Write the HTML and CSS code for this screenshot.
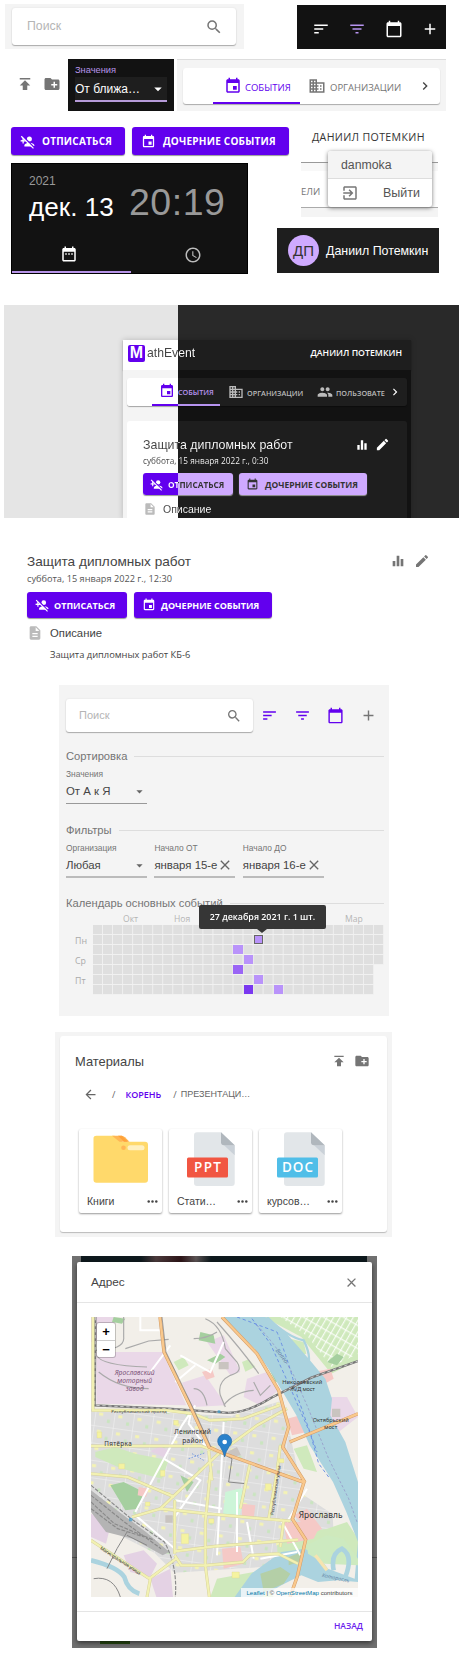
FILE: index.html
```html
<!DOCTYPE html>
<html lang="ru">
<head>
<meta charset="utf-8">
<title>MathEvent</title>
<link rel="stylesheet" href="styles.css">
</head>
<body>
<svg class="sprite" width="0" height="0">
  <symbol id="search" viewBox="0 0 24 24"><path d="M15.5 14h-.79l-.28-.27A6.471 6.471 0 0 0 16 9.5 6.5 6.5 0 1 0 9.5 16c1.61 0 3.09-.59 4.23-1.57l.27.28v.79l5 4.99L20.49 19l-4.99-5zm-6 0C7.01 14 5 11.99 5 9.5S7.01 5 9.5 5 14 7.01 14 9.5 11.99 14 9.5 14z"/></symbol>
  <symbol id="sort" viewBox="0 0 24 24"><path d="M3 18h6v-2H3v2zM3 6v2h18V6H3zm0 7h12v-2H3v2z"/></symbol>
  <symbol id="filter" viewBox="0 0 24 24"><path d="M10 18h4v-2h-4v2zM3 6v2h18V6H3zm3 7h12v-2H6v2z"/></symbol>
  <symbol id="calendar" viewBox="0 0 24 24"><path d="M20 3h-1V1h-2v2H7V1H5v2H4c-1.1 0-2 .9-2 2v16c0 1.1.9 2 2 2h16c1.1 0 2-.9 2-2V5c0-1.1-.9-2-2-2zm0 18H4V8h16v13z"/></symbol>
  <symbol id="add" viewBox="0 0 24 24"><path d="M19 13h-6v6h-2v-6H5v-2h6V5h2v6h6v2z"/></symbol>
  <symbol id="publish" viewBox="0 0 24 24"><path d="M5 4v2h14V4H5zm0 10h4v6h6v-6h4l-7-7-7 7z"/></symbol>
  <symbol id="newfolder" viewBox="0 0 24 24"><path d="M20 6h-8l-2-2H4c-1.11 0-1.99.89-1.99 2L2 18c0 1.11.89 2 2 2h16c1.11 0 2-.89 2-2V8c0-1.11-.89-2-2-2zm-1 8h-3v3h-2v-3h-3v-2h3V9h2v3h3v2z"/></symbol>
  <symbol id="event" viewBox="0 0 24 24"><path d="M17 12h-5v5h5v-5zM16 1v2H8V1H6v2H5c-1.11 0-1.99.9-1.99 2L3 19c0 1.1.89 2 2 2h14c1.1 0 2-.9 2-2V5c0-1.1-.9-2-2-2h-1V1h-2zm3 18H5V8h14v11z"/></symbol>
  <symbol id="business" viewBox="0 0 24 24"><path d="M12 7V3H2v18h20V7H12zM6 19H4v-2h2v2zm0-4H4v-2h2v2zm0-4H4V9h2v2zm0-4H4V5h2v2zm4 12H8v-2h2v2zm0-4H8v-2h2v2zm0-4H8V9h2v2zm0-4H8V5h2v2zm10 12h-8v-2h2v-2h-2v-2h2v-2h-2V9h8v10zm-2-8h-2v2h2v-2zm0 4h-2v2h2v-2z"/></symbol>
  <symbol id="people" viewBox="0 0 24 24"><path d="M16 11c1.66 0 2.99-1.34 2.99-3S17.66 5 16 5c-1.66 0-3 1.34-3 3s1.34 3 3 3zm-8 0c1.66 0 2.99-1.34 2.99-3S9.66 5 8 5C6.34 5 5 6.34 5 8s1.34 3 3 3zm0 2c-2.33 0-7 1.17-7 3.5V19h14v-2.5c0-2.33-4.67-3.5-7-3.5zm8 0c-.29 0-.62.02-.97.05 1.16.84 1.97 1.97 1.97 3.45V19h6v-2.5c0-2.33-4.67-3.5-7-3.5z"/></symbol>
  <symbol id="chevron" viewBox="0 0 24 24"><path d="M10 6 8.59 7.41 13.17 12l-4.58 4.59L10 18l6-6z"/></symbol>
  <symbol id="unsub" viewBox="0 0 24 24"><circle cx="15" cy="8" r="4"/><path d="M15 14c-2.67 0-8 1.34-8 4v2h12l4-1v-1c0-2.66-5.330-4-8-4zM6 10V6H4v3.500L1 10v2h3v3h2v-3h3v-2z"/><path d="M3.500 2.500 23 22" stroke="var(--gap)" stroke-width="2.200"/><path d="M2 3.500 21.500 23" stroke="currentColor" stroke-width="2"/></symbol>
  <symbol id="range" viewBox="0 0 24 24"><path d="M9 11H7v2h2v-2zm4 0h-2v2h2v-2zm4 0h-2v2h2v-2zm2-7h-1V2h-2v2H8V2H6v2H5c-1.11 0-1.99.9-1.99 2L3 20c0 1.1.89 2 2 2h14c1.1 0 2-.9 2-2V6c0-1.100-.9-2-2-2zm0 16H5V9h14v11z"/></symbol>
  <symbol id="clock" viewBox="0 0 24 24"><path d="M11.99 2C6.47 2 2 6.48 2 12s4.47 10 9.99 10C17.52 22 22 17.52 22 12S17.52 2 11.99 2zM12 20c-4.42 0-8-3.58-8-8s3.58-8 8-8 8 3.58 8 8-3.58 8-8 8zm.5-13H11v6l5.25 3.150.75-1.230-4.500-2.670z"/></symbol>
  <symbol id="exit" viewBox="0 0 24 24"><path d="M10.09 15.59 11.5 17l5-5-5-5-1.41 1.41L12.67 11H3v2h9.67l-2.58 2.59zM19 3H5c-1.11 0-2 .9-2 2v4h2V5h14v14H5v-4H3v4c0 1.100.89 2 2 2h14c1.100 0 2-.9 2-2V5c0-1.100-.9-2-2-2z"/></symbol>
  <symbol id="chart" viewBox="0 0 24 24"><path d="M10 20h4V4h-4v16zm-6 0h4v-8H4v8zM16 9v11h4V9h-4z"/></symbol>
  <symbol id="edit" viewBox="0 0 24 24"><path d="M3 17.25V21h3.75L17.81 9.94l-3.75-3.75L3 17.25zM20.71 7.04a.996.996 0 0 0 0-1.41l-2.34-2.34a.996.996 0 0 0-1.41 0l-1.83 1.83 3.75 3.75 1.83-1.83z"/></symbol>
  <symbol id="doc" viewBox="0 0 24 24"><path d="M14 2H6c-1.1 0-1.99.9-1.99 2L4 20c0 1.1.89 2 1.99 2H18c1.1 0 2-.9 2-2V8l-6-6zm2 16H8v-2h8v2zm0-4H8v-2h8v2zm-3-5V3.5L18.5 9H13z"/></symbol>
  <symbol id="close" viewBox="0 0 24 24"><path d="M19 6.41 17.59 5 12 10.59 6.41 5 5 6.41 10.59 12 5 17.59 6.41 19 12 13.41 17.59 19 19 17.59 13.41 12z"/></symbol>
  <symbol id="back" viewBox="0 0 24 24"><path d="M20 11H7.83l5.59-5.59L12 4l-8 8 8 8 1.41-1.41L7.83 13H20v-2z"/></symbol>
  <symbol id="more" viewBox="0 0 24 24"><circle cx="5" cy="12" r="2.300"/><circle cx="12" cy="12" r="2.300"/><circle cx="19" cy="12" r="2.300"/></symbol>
  <symbol id="drop" viewBox="0 0 24 24"><path d="M7 10l5 5 5-5z"/></symbol>
</svg>

<main class="sheet">
  <section class="row row-search">
    <div class="search-wrap"><div class="search"><span>Поиск</span><svg class="i18"><use href="#search"/></svg></div></div>
    <div class="toolbar">
      <svg class="i18"><use href="#sort"/></svg>
      <svg class="i18 lilac"><use href="#filter"/></svg>
      <svg class="i18"><use href="#calendar"/></svg>
      <svg class="i18"><use href="#add"/></svg>
    </div>
  </section>

  <section class="row row-tabs">
    <div class="file-actions"><svg class="i18"><use href="#publish"/></svg><svg class="i18"><use href="#newfolder"/></svg></div>
    <div class="select-dark">
      <label>Значения</label>
      <div class="select-field"><span>От ближа…</span><svg class="i18"><use href="#drop"/></svg></div>
    </div>
    <div class="tabs-wrap">
      <nav class="tabs">
        <a class="tab active"><svg class="i18"><use href="#event"/></svg><span>СОБЫТИЯ</span></a>
        <a class="tab org"><svg class="i18"><use href="#business"/></svg><span>ОРГАНИЗАЦИИ</span></a>
        <svg class="next"><use href="#chevron"/></svg>
      </nav>
    </div>
  </section>

  <section class="row row-actions">
    <button class="btn b1"><svg class="i15"><use href="#unsub"/></svg><span>ОТПИСАТЬСЯ</span></button>
    <button class="btn b2"><svg class="i15"><use href="#event"/></svg><span>ДОЧЕРНИЕ СОБЫТИЯ</span></button>
    <span class="account">ДАНИИЛ ПОТЕМКИН</span>
  </section>

  <section class="row row-picker">
    <div class="picker">
      <div class="picker-head">
        <div class="picker-date"><span class="year">2021</span><span class="day">дек. 13</span></div>
        <span class="time">20:19</span>
      </div>
      <div class="picker-tabs">
        <span class="on"><svg class="i18"><use href="#range"/></svg></span>
        <span><svg class="i18"><use href="#clock"/></svg></span>
      </div>
    </div>
    <div class="user-side">
      <div class="strip">
        <div class="strip-tabs">ЕЛИ</div>
        <div class="menu">
          <div class="menu-user">danmoka</div>
          <div class="menu-item"><svg class="i18"><use href="#exit"/></svg><span>Выйти</span></div>
        </div>
      </div>
      <div class="usercard"><span class="avatar">ДП</span><span>Даниил Потемкин</span></div>
    </div>
  </section>

  <section class="themes">
    <div class="app">
      <header class="app-head">
        <div class="logo"><b>M</b></div><span class="split brand">athEvent</span>
        <span class="app-user">ДАНИИЛ ПОТЕМКИН</span>
      </header>
      <div class="app-body">
        <nav class="app-tabs">
          <a class="app-tab app-active"><svg class="i16"><use href="#event"/></svg><span>СОБЫТИЯ</span></a>
          <a class="app-tab app-org"><svg class="i16"><use href="#business"/></svg><span>ОРГАНИЗАЦИИ</span></a>
          <a class="app-tab app-ppl"><svg class="i16"><use href="#people"/></svg><span>ПОЛЬЗОВАТЕ</span></a>
          <svg class="app-next"><use href="#chevron"/></svg>
        </nav>
        <article class="app-card">
          <div class="app-title"><span class="split">Защита дипломных работ</span><svg class="i14"><use href="#chart"/></svg><svg class="i15"><use href="#edit"/></svg></div>
          <div class="app-date"><span class="split">суббота, 15 января 2022 г., 0:30</span></div>
          <div class="app-buttons">
            <button class="btn s1"><svg class="i13"><use href="#unsub"/></svg><span class="split">ОТПИСАТЬСЯ</span></button>
            <button class="btn s2"><svg class="i13"><use href="#event"/></svg><span>ДОЧЕРНИЕ СОБЫТИЯ</span></button>
          </div>
          <div class="app-desc"><svg class="i14"><use href="#doc"/></svg><span class="split">Описание</span></div>
        </article>
      </div>
    </div>
  </section>

  <section class="details">
    <div class="details-title"><h2>Защита дипломных работ</h2><svg class="i16"><use href="#chart"/></svg><svg class="i16"><use href="#edit"/></svg></div>
    <div class="details-date">суббота, 15 января 2022 г., 12:30</div>
    <div class="details-buttons">
      <button class="btn d1"><svg class="i14"><use href="#unsub"/></svg><span>ОТПИСАТЬСЯ</span></button>
      <button class="btn d2"><svg class="i14"><use href="#event"/></svg><span>ДОЧЕРНИЕ СОБЫТИЯ</span></button>
    </div>
    <div class="details-desc"><svg class="i16"><use href="#doc"/></svg><span>Описание</span></div>
    <p>Защита дипломных работ КБ-6</p>
  </section>

  <section class="filters">
    <div class="filters-top">
      <div class="search small"><span>Поиск</span><svg class="i16"><use href="#search"/></svg></div>
      <svg class="i17"><use href="#sort"/></svg>
      <svg class="i17"><use href="#filter"/></svg>
      <svg class="i17"><use href="#calendar"/></svg>
      <svg class="i17 gray"><use href="#add"/></svg>
    </div>
    <div class="rule r1"><span>Сортировка</span></div>
    <div class="fields f1">
      <div class="field"><label>Значения</label><div class="value"><span>От А к Я</span><svg class="i15"><use href="#drop"/></svg></div></div>
    </div>
    <div class="rule r2"><span>Фильтры</span></div>
    <div class="fields f2">
      <div class="field thick"><label>Организация</label><div class="value"><span>Любая</span><svg class="i15"><use href="#drop"/></svg></div></div>
      <div class="field thick"><label>Начало ОТ</label><div class="value"><span>января 15-е</span><svg class="i16 clear"><use href="#close"/></svg></div></div>
      <div class="field thick"><label>Начало ДО</label><div class="value"><span>января 16-е</span><svg class="i16 clear"><use href="#close"/></svg></div></div>
    </div>
    <div class="rule r3"><span>Календарь основных событий</span></div>
    <div class="heat">
      <div class="months"><span class="m1">Окт</span><span class="m2">Ноя</span><span class="m3">Фев</span><span class="m4">Мар</span></div>
      <div class="heat-body">
        <div class="weekdays"><span>Пн</span><span>Ср</span><span>Пт</span></div>
        <div class="cells">
          <i class="blank"></i><i class="c1"></i><i class="c2"></i><i class="c3"></i><i class="c4"></i><i class="c5"></i><i class="c6"></i><i class="c7"></i>
        </div>
      </div>
      <div class="tip">27 декабря 2021 г. 1 шт.</div>
    </div>
  </section>

  <section class="files-wrap">
    <div class="files">
      <div class="files-head"><h2>Материалы</h2><svg class="i16"><use href="#publish"/></svg><svg class="i16"><use href="#newfolder"/></svg></div>
      <div class="crumbs"><svg class="i15"><use href="#back"/></svg><span class="sl1">/</span><a>КОРЕНЬ</a><span class="sl2">/</span><span class="here">ПРЕЗЕНТАЦИ…</span></div>
      <div class="tiles">
        <div class="tile">
          <svg class="art" viewBox="0 0 83 60"><path d="M14.500 10a3 3 0 0 1 3-3.300h18l8 6h22.500a3 3 0 0 1 3 3v35a3 3 0 0 1-3 3h-48.500a3 3 0 0 1-3-3z" fill="#ffd96b"/><path d="M33 6.700h9.500q2 0 3.500 1.500l4.500 4.500h-10z" fill="#ffb655"/><path d="M39 6.700h4l6 6h-4z" fill="#ffa23a"/><circle cx="44.500" cy="18.700" r="2.300" fill="#ffb655"/><rect x="48.500" y="16.300" width="17" height="5" rx="2.500" fill="#fff0c0"/></svg>
          <div class="tile-foot"><span>Книги</span><svg class="i13"><use href="#more"/></svg></div>
        </div>
        <div class="tile">
          <svg class="art" viewBox="0 0 83 60"><path d="M28 3.300h24l13.700 13V54a3 3 0 0 1-3 3H28a3 3 0 0 1-3-3V6.300a3 3 0 0 1 3-3z" fill="#e2e6e9"/><path d="M55 16.300h10.700v10z" fill="#cad1d8"/><path d="M52 3.300l13.700 13H55a3 3 0 0 1-3-3z" fill="#b0b7bd"/><rect x="18" y="28.500" width="41" height="20" rx="1.500" fill="#f15642"/><text x="38.500" y="43" class="badge" textLength="27">PPT</text></svg>
          <div class="tile-foot"><span>Стати…</span><svg class="i13"><use href="#more"/></svg></div>
        </div>
        <div class="tile">
          <svg class="art" viewBox="0 0 83 60"><path d="M28 3.300h24l13.700 13V54a3 3 0 0 1-3 3H28a3 3 0 0 1-3-3V6.300a3 3 0 0 1 3-3z" fill="#e2e6e9"/><path d="M55 16.300h10.700v10z" fill="#cad1d8"/><path d="M52 3.300l13.700 13H55a3 3 0 0 1-3-3z" fill="#b0b7bd"/><rect x="18" y="28.500" width="41" height="20" rx="1.500" fill="#50bee8"/><text x="38.500" y="43" class="badge" textLength="31">DOC</text></svg>
          <div class="tile-foot"><span>курсов…</span><svg class="i13"><use href="#more"/></svg></div>
        </div>
      </div>
    </div>
  </section>

  <section class="backdrop">
    <div class="modal">
      <header><h2>Адрес</h2><svg class="i15"><use href="#close"/></svg></header>
      <div class="map">
        <svg viewBox="92 215 801 840" preserveAspectRatio="none">
          <defs>
            <pattern id="blocks" width="58" height="52" patternUnits="userSpaceOnUse" patternTransform="rotate(8)"><path d="M0 0H58M0 0V52" stroke="#f4f4f4" stroke-width="3"/><rect x="12" y="12" width="12" height="9" fill="#f4f3b4"/><rect x="38" y="30" width="9" height="10" fill="#c9e5bf"/></pattern>
            <pattern id="garden" width="17" height="30" patternUnits="userSpaceOnUse" patternTransform="rotate(30)"><path d="M2 0V30M0 2H17" stroke="#fff" stroke-width="3"/></pattern>
          </defs>
          <path fill="#f2efe9" d="M92 215h801v840H92z"/>
          <path fill="#ead8e8" d="M92 215h70v75H92zM108 320h198l72 160-270-5zM365 412l70-22 62 90-100 5zM440 290l50-20 50 110-30 10zM560 400l60-20 40 50-60 50-50-25zM785 455h75l33 60-65 50z"/>
          <path fill="#ddd" d="M92 492l420 20 150-45 25 90 40 190 90 60 5 110-90 40-390 25-60-60-100-50-90-110-20-20z"/>
          <path fill="url(#blocks)" d="M92 492l420 20 150-45 25 90 40 190 90 60 5 110-90 40-390 25-60-60-100-50-90-110-20-20z"/>
          <path fill="#cfe9bc" d="M610 215h283v130l-80 40-90-110zM545 350l20-8 20 22-30 15zM690 280l40 10 8 35-30 12zM340 350l30-15 15 25-30 15zM105 620l60-15 60 20 100 20-20 55-120-30-80-35zM700 610l40-10 30 80-40-10zM650 900l90-40 60-10 60-20 33 50v60l-240 10zM470 1000l110-20 60 75H450z"/>
          <path fill="url(#garden)" d="M660 215h233v110l-80 40-70-90z"/>
          <path fill="#a5cf9f" d="M150 720l40-10 60 30-15 50-40 5zM605 330l25 15 25 55-8 12zM640 390l20 5 18 45-15-8zM160 215l35 5-10 15-30-5zM360 690l40 20-20 30zM800 350l30-25 20 10-20 25zM440 345l40-20 15 10-30 20zM420 260l40 10 5 25-50-10z"/>
          <path fill="#f5c9c6" d="M670 830l60 0 40 30-10 20-80 15zM700 810l40-20 45 60-25 15zM545 775l40 5-5 40-35-5zM485 910l55-5 10 50-60 15zM235 725l30 5-8 25-25-5zM425 380l30-10 8 25-25 8zM760 380l50-10 10 30-35 20zM680 520l40-10 20 50-45 10z"/>
          <path fill="#e4d2e4" d="M92 805l60 30-15 60-45-20zM190 930l60-15 40 40-20 40-60-15zM270 1000l60-30 8 85h-50zM270 618l30-15 30 15-20 18z"/>
          <path fill="#c9c4c0" d="M475 350h30v22h-30zM815 490h25v25h-25zM315 810h22v22h-22zM500 620l30-15 12 25-30 5z"/>
          <path fill="#cdf5d8" d="M495 740l50-12 8 30-15 50-50 0z"/>
          <path fill="#abd3df" d="M485 215h130l60 45 70 80 50 60 20 60-5 50 45 80 38 120v180l-35-90-40-90-70-110-40-90-70-120-55-80z"/>
          <path fill="#abd3df" d="M893 890v120l-60-5-60 5-50-20-60 30-60 35h-80l50-70 90-65 70-10 40 20 30 40 80 30z"/>
          <path fill="#b4cfa7" d="M600 985l60-20 30 20-20 30-60 25zM685 935l40-15-10 30-30 10z"/>
          <path fill="#cdeac0" d="M740 900l60-30 50 10 43 60v20l-100-5-50-30z"/>
          <path fill="none" stroke="#abd3df" stroke-width="14" d="M820 975q-10-50 25-65 35 20 10 85M92 945q80 20 100 50 10 40 45 50"/>
          <path fill="none" stroke="#abd3df" stroke-width="7" d="M620 215q60 60 110 70 20 40 15 65"/>
          <path fill="none" stroke="#f6e4b0" stroke-width="10" d="M765 930l35 45"/>
          <path fill="none" stroke="#6d92e4" stroke-width="3" stroke-dasharray="10 8" d="M530 215l120 45q40 100 60 190l60 170M575 220l55 75 50 110 70 160 25 90 30 40"/>
          <path fill="none" stroke="#87b" stroke-width="1.500" stroke-dasharray="8 6" d="M590 240q60 60 110 150l40 90 65 160 60 120 25 70"/>
          <g fill="none" stroke="#aaa" stroke-width="3.500"><path d="M190 215v60q5 40-90 40M195 310l70-23 60-5M110 330q10 30 150 35M115 380q60 50 150 50M435 220q50 20 60 90l35 40q20 30-20 40-40 20-30 60l15 35M470 230q80 90 125 155M400 280q40 0 70-20M490 480q30-40 90-45M400 430q30 0 40 50M580 410l20 40 30-30"/></g>
          <path fill="none" stroke="#fff" stroke-width="6" d="M240 215v40h60M330 300l-60 80M360 330l90 50 40-90M345 410l60-50M405 480l-40 60-140 260M310 640l110 65-80 115M490 530l-20 400M345 765l140 25M680 830l60-100M560 830l20 110M660 820l60 110M600 940l110-20M225 810l130 110M530 740v180M395 485l-10 50 60 80"/>
          <path fill="#b4b4b4" d="M92 735l85 65 80 60 70 60-20 10-90-50-80-20-45-60z"/>
          <path fill="none" stroke="#8a8a8a" stroke-width="3.500" stroke-dasharray="12 4" d="M92 720l120 100 100 70q40 70 33 165M92 750l100 80 110 80M92 770l70 65 120 50M92 790l80 60 80 25"/>
          <path fill="none" stroke="#777" stroke-width="7" d="M105 215l-2 265 220 10 170 12q60 5 140-45l120-60 140-50"/>
          <path fill="none" stroke="#ccc" stroke-width="3" stroke-dasharray="10 8" d="M105 215l-2 265 220 10 170 12q60 5 140-45l120-60 140-50"/>
          <path fill="none" stroke="#888" stroke-width="3" d="M200 860l-30 50-30 60M100 1000q60-10 80 55M200 870l60 30M495 630l20 10-10 70 50 5-5 40"/>
          <path fill="none" stroke="#d5d09a" stroke-width="9" d="M98 215v280h220l80 10 50 20 100-5 110-40M92 602h330l60 20M92 685l110 10 140 60M680 490l-90 50-110 80-180 170-85 25M300 790l140 15 190 17 60 5M343 765v160M570 650l-30 140M660 600l-10 80-25 140M343 918l120-15 250-20M343 930l20 30 75 0 110-10 20-20 85-5 60 30M450 680l-15 150v130l12 95M92 885l175 115 80-60M270 1000l-10 55M445 615l10 90M670 825l-10 80"/>
          <path fill="none" stroke="#f2f1b2" stroke-width="6.500" d="M98 215v280h220l80 10 50 20 100-5 110-40M92 602h330l60 20M92 685l110 10 140 60M680 490l-90 50-110 80-180 170-85 25M300 790l140 15 190 17 60 5M343 765v160M570 650l-30 140M660 600l-10 80-25 140M343 918l120-15 250-20M343 930l20 30 75 0 110-10 20-20 85-5 60 30M450 680l-15 150v130l12 95M92 885l175 115 80-60M270 1000l-10 55M445 615l10 90M670 825l-10 80"/>
          <path fill="none" stroke="#d29b67" stroke-width="10" d="M299 215l12 105 80 165 55 120 40 18 245 88-35 110 40 62-25 110-22 62M485 215l105 110 65 110 30 110-18 60 67 106M893 505l-205 85"/>
          <path fill="none" stroke="#f9c88c" stroke-width="7" d="M299 215l12 105 80 165 55 120 40 18 245 88-35 110 40 62-25 110-22 62M485 215l105 110 65 110 30 110-18 60 67 106M893 505l-205 85"/>
          <path fill="none" stroke="#777" stroke-width="2" d="M305 215l12 105 80 165 55 120"/>
          <g fill="#f5f3a0" stroke="#ddd694" stroke-width="1"><path d="M175 655h18v16h-18zM300 675h14v18h-14zM615 715h18v20h-18zM363 865h22v30h-22zM445 820h16v14h-16zM515 980h22v18h-22zM110 560h14v18h-14zM340 525h14v14h-14zM655 640h16v12h-16zM255 770h14v12h-14z"/></g>
          <path fill="#39c" d="M206 818h10v10h-10zM472 495h8v8h-8z" opacity=".7"/>
          <path fill="none" stroke="#4f7de0" stroke-width="2" stroke-dasharray="5 4" d="M385 640l50-18M395 625l35 20"/>
          <g class="lbl" text-anchor="middle">
            <g font-style="italic" fill="#7c5578" font-size="20"><text x="223" y="388" textLength="120">Ярославский</text><text x="223" y="412" textLength="104">моторный</text><text x="223" y="436" textLength="54">завод</text></g>
            <g font-size="17"><text x="726" y="417" textLength="120">Николаевский</text><text x="727" y="438" textLength="74">Ж/Д мост</text><text x="811" y="531" textLength="108">Октябрьский</text><text x="811" y="551" textLength="40">мост</text><text x="173" y="603" font-size="19" textLength="82">Пятёрка</text></g>
            <g font-size="20"><text x="397" y="567" textLength="110">Ленинский</text><text x="397" y="593" textLength="62">район</text></g>
            <text x="236" y="502" font-size="13" textLength="166">Республиканский проезд</text>
            <text x="781" y="819" font-size="25" textLength="132">Ярославль</text>
            <text transform="translate(178 950) rotate(33)" font-size="14" textLength="142">Магистральная улица</text>
            <text transform="translate(650 735) rotate(-82)" font-size="13" textLength="150">Республиканская улица</text>
            <text transform="translate(825 1003) rotate(12)" font-size="16" font-style="italic" fill="#6787a8" textLength="84">Которосль</text>
            <text transform="translate(660 335) rotate(52)" font-size="18" font-style="italic" fill="#6787a8" textLength="50">Волга</text>
          </g>
          <path d="M493 635q-5-18-13-31a21 21 0 1 1 26 0q-9 13-13 31z" fill="#2a81cb" stroke="#2268a5" stroke-width="2"/><circle cx="493" cy="590" r="7" fill="#fff"/>
        </svg>
        <div class="zoom"><button>+</button><button>−</button></div>
        <div class="credit"><a>Leaflet</a> | © <a>OpenStreetMap</a> contributors</div>
      </div>
      <footer><a>НАЗАД</a></footer>
    </div>
  </section>
</main>
</body>
</html>
```
FILE: styles.css
```css
* { box-sizing: border-box; }
body { margin: 0; background: #fff; font-family: "Liberation Sans", Arial, sans-serif; color: #444; }
.sprite { position: absolute; }
svg { flex: none; fill: currentColor; display: block; }
h2, p { margin: 0; font-weight: 400; }
span, a, label { white-space: nowrap; }
.sheet { width: 468px; height: 1676px; overflow: hidden; }
.row { display: flex; }
.i13 { width: 13px; height: 13px; }
.i14 { width: 14px; height: 14px; }
.i15 { width: 15px; height: 15px; }
.i16 { width: 16px; height: 16px; }
.i17 { width: 17px; height: 17px; }
.i18 { width: 18px; height: 18px; }
.lilac { color: #b794f0; }

.row-search { padding: 4px 0 0 5px; height: 59px; }
.search-wrap { width: 239px; height: 45px; background: #f4f4f4; padding: 4px 7px; }
.search { height: 37px; width: 224px; display: flex; align-items: center; justify-content: space-between; padding: 0 13px 0 15px; background: #fff; border-radius: 3px; box-shadow: 0 1px 1px #aaa, 0 0 2px #ddd; font-size: 12.3px; color: #b5b5b5; }
.search span { margin-top: -1px; }
.search svg { color: #757575; }
.toolbar { margin: 1px 0 0 53px; width: 149px; height: 44px; background: #121212; color: #fff; display: flex; align-items: center; gap: 18.400px; padding: 3px 0 0 15px; }

.row-tabs { height: 68px; }
.file-actions { width: 68px; display: flex; gap: 9px; padding: 16px 0 0 16px; color: #757575; }
.select-dark { width: 106px; height: 52px; background: #121212; padding: 6px 7px; color: #b794e8; font-size: 9.300px; line-height: 12px; }
.select-dark label { display: block; margin-top: -1px; }
.select-field { margin-top: 1px; height: 25px; background: #1e1e1e; border-bottom: 2px solid #b59ad8; color: #fff; font-size: 12px; display: flex; align-items: center; justify-content: space-between; }
.tabs-wrap { margin-left: 3px; width: 269px; height: 52px; background: #f4f4f4; border-top: 1px solid #ddd; padding: 8px 6px; }
.tabs { height: 36px; width: 257px; background: #fff; border-radius: 3px; box-shadow: 0 1px 1px #aaa; display: flex; padding-left: 30px; font: 500 9.500px "Open Sans", sans-serif; color: #757575; }
.tab { display: flex; align-items: center; }
.tab span { margin-top: 2px; }
.active { width: 87px; padding-left: 11px; gap: 3px; border-bottom: 2px solid #6200ee; color: #6200ee; padding-top: 2px; }
.org { padding-left: 8px; gap: 4px; width: 103px; }
.next { width: 16px; height: 16px; margin: 10px 0 0 14px; color: #444; }

.row-actions { height: 36px; padding-left: 11px; }
.btn { border: 0; padding: 0; display: flex; align-items: center; background: #6200ee; --gap: #6200ee; color: #fff; border-radius: 3px; box-shadow: 0 1px 1px #999; font: 700 10px "Open Sans", sans-serif; flex: none; }
.b1, .b2 { height: 28px; letter-spacing: .22px; }
.b1 { width: 114px; padding-left: 9px; gap: 7px; }
.b2 { width: 157px; margin-left: 7px; padding-left: 9px; gap: 7px; }
.account { margin-left: 23px; font: 500 10.600px/20px "Open Sans", sans-serif; letter-spacing: .35px; color: #333; }

.row-picker { padding-left: 11px; height: 142px; }
.picker { width: 237px; height: 111px; background: #121212; border: 1px solid #000; color: #fff; }
.picker-head { display: flex; height: 73px; }
.picker-date { width: 117px; padding: 9px 0 0 17px; display: flex; flex-direction: column; }
.year { font-size: 12px; line-height: 16px; color: #999; }
.day { font-size: 26.100px; line-height: 36px; }
.time { font-size: 37.500px; line-height: 76px; color: #999; letter-spacing: .5px; }
.picker-tabs { display: grid; grid-template-columns: 119px 1fr; height: 36px; }
.picker-tabs span { display: flex; align-items: center; padding: 0 0 1px 53px; color: #bbb; }
.picker-tabs .on { border-bottom: 2px solid #b794e8; color: #fff; padding: 0 0 0 48px; }
.user-side { margin-left: 29px; width: 162px; }
.strip { position: relative; margin-left: 24px; width: 137px; height: 54px; background: #f4f4f4; border-top: 8px solid #f8f8f8; box-shadow: 0 -1px #999; }
.strip-tabs { height: 37px; background: #fff; border-bottom: 1px solid #aaa; font: 500 9.500px/41px "Open Sans", sans-serif; color: #757575; }
.menu { position: absolute; left: 27px; top: -20px; width: 104px; height: 56px; background: #fff; border-radius: 3px; box-shadow: 0 1px 4px #777; overflow: hidden; color: #555; }
.menu-user { height: 28px; background: #f4f4f4; border-bottom: 1px solid #ddd; padding-left: 13px; font-size: 12.300px; line-height: 28px; }
.menu-item { display: flex; height: 28px; align-items: center; justify-content: space-between; padding: 0 12px 0 13px; font-size: 12.500px; }
.menu-item svg { color: #777; }
.usercard { margin-top: 11px; width: 162px; height: 45px; background: #1e1e1e; color: #fff; display: flex; align-items: center; gap: 7px; padding-left: 11px; font-size: 12.400px; }
.avatar { width: 31px; height: 31px; border-radius: 50%; background: #cfaaff; color: #333; font-size: 15px; line-height: 31px; text-align: center; }

.themes { margin-left: 4px; width: 455px; height: 213px; padding: 35px 0 0 119px; background: linear-gradient(90deg, #e5e5e5 174px, #292929 174px); overflow: hidden; }
.app { width: 288px; box-shadow: 0 0 6px #0003; }
.app-head { height: 30px; display: flex; align-items: center; padding: 0 9px 4px 5px; background: linear-gradient(90deg, #fff 55px, #1e1e1e 55px); box-shadow: 0 1px 1px #0006; }
.logo { width: 17px; height: 17px; border-radius: 2px; background: #6200ee; color: #fff; display: flex; align-items: center; justify-content: center; font-size: 16px; }
.split { color: transparent; background: linear-gradient(90deg, var(--l, #444) var(--cut), var(--d, #fff) var(--cut)); background-clip: text; -webkit-background-clip: text; }
.brand { --cut: 31px; font-size: 12.200px; margin-left: 2px; }
.app-user { margin-left: auto; color: #fff; font: 600 8.750px "Open Sans", sans-serif; }
.app-body { background: linear-gradient(90deg, #f4f4f4 55px, #121212 55px); padding: 8px 4px 0; }
.app-tabs { height: 28px; display: flex; border-radius: 3px; background: linear-gradient(90deg, #fff 51px, #1e1e1e 51px); box-shadow: 0 1px 1px #0005; padding-left: 25px; font: 600 7.250px "Open Sans", sans-serif; color: #bbb; }
.app-tab { display: flex; align-items: center; gap: 3px; }
.app-tab span { margin-top: 2px; }
.app-active { width: 68px; padding-left: 7px; border-bottom: 2px solid; border-image: linear-gradient(90deg, #6200ee 26px, #b794f0 26px) 1; color: #b794f0; }
.app-active svg { color: #6200ee; }
.app-org { width: 89px; padding-left: 8px; }
.app-ppl { width: 75px; padding-left: 8px; }
.app-next { width: 14px; height: 14px; color: #fff; margin: 7px 0 0 4px; }
.app-card { margin-top: 15px; height: 98px; padding: 15px 16px 0; border-radius: 3px 3px 0 0; background: linear-gradient(90deg, #fff 51px, #1e1e1e 51px); }
.app-title { display: flex; align-items: center; color: #fff; font-size: 12.400px; height: 17px; padding-right: 1px; }
.app-title .i14 { margin-left: auto; margin-right: 6px; }
.app-title .split, .app-date .split { --cut: 35px; }
.app-date { font: 500 8.250px/14px "Open Sans", sans-serif; margin-top: 1px; }
.app-buttons { display: flex; gap: 6px; margin-top: 5px; }
.app-buttons .btn { height: 22px; font-size: 8.500px; gap: 6px; padding-left: 7px; background: #cfaaff; color: #333; }
.app-buttons .btn.s1 { width: 90px; gap: 5px; font-size: 8.300px; background: linear-gradient(90deg, #6200ee 35px, #cfaaff 35px); color: #fff; }
.s2 { width: 128px; }
.s1 .split { --cut: 10px; --l: #fff; --d: #333; }
.app-desc { display: flex; align-items: center; gap: 6px; margin-top: 7px; font-size: 10.500px; color: #bbb; }
.app-desc .split { --cut: 15px; }

.details { height: 167px; padding: 35px 38px 0 27px; }
.details-title { display: flex; height: 16px; align-items: center; color: #757575; }
.details h2 { font-size: 13.600px; color: #444; margin-right: auto; }
.details-title .i16 + .i16 { margin-left: 8px; }
.details-date { font: 400 9.200px/14px "Open Sans", sans-serif; margin-top: 3px; color: #555; }
.details-buttons { display: flex; gap: 7px; margin-top: 6px; }
.details-buttons .btn { height: 26px; padding-left: 8px; gap: 5px; font-size: 9px; }
.d1 { width: 100px; }
.d2 { width: 138px; }
.details-desc { display: flex; align-items: center; gap: 7px; margin-top: 7px; color: #bbb; }
.details-desc span { font-size: 11.300px; color: #444; }
.details p { font: 400 9.300px/14px "Open Sans", sans-serif; margin: 7px 0 0 23px; }

.filters { margin-left: 59px; width: 330px; height: 331px; background: #f4f4f4; padding: 14px 5px 0 7px; color: #757575; }
.filters-top { display: flex; align-items: center; color: #6200ee; gap: 16px; }
.search.small { width: 187px; height: 33px; margin-right: -8px; padding: 0 11px 0 13px; font-size: 11px; }
.gray { color: #757575; }
.rule { display: flex; align-items: center; gap: 7px; height: 14px; font-size: 11.200px; }
.rule::after { content: ""; flex: 1; height: 1px; background: #ddd; }
.r1 { margin-top: 17px; }
.fields { display: flex; gap: 7.400px; height: 42px; padding-top: 5px; }
.field { width: 81px; height: 36px; border-bottom: 1px solid #999; }
.thick { border-bottom: 2px solid #bbb; }
.field label { display: block; font-size: 8.400px; line-height: 12px; }
.value { display: flex; align-items: center; justify-content: space-between; height: 22px; font-size: 11.400px; color: #444; }
.value svg { color: #666; }
.value .clear { margin-right: 2px; }
.r2 { margin-top: 18px; }
.r3 { margin-top: 17px; }
.heat { position: relative; }
.months { display: grid; grid-template-columns: 30px 50px 137px 33px 1fr; height: 18px; font: 8.600px/18px "Open Sans", sans-serif; color: #b5b5b5; }
.m1 { grid-column: 2; padding-left: 27px; }
.m2 { grid-column: 3; padding-left: 28px; }
.m3 { grid-column: 4; padding-left: 24px; }
.m4 { grid-column: 5; padding-left: 29px; }
.heat-body { display: flex; margin-top: -3px; }
.weekdays { width: 27px; padding: 6px 0 0 9px; display: flex; flex-direction: column; font: 8.800px/20px "Open Sans", sans-serif; color: #aaa; }
.cells { width: 291px; height: 70px; display: grid; grid-template: repeat(7, 1fr) / repeat(29, 1fr); background: linear-gradient(90deg, transparent 9px, #f1f1f1 9px) 0 0 / 10.034px 10px, linear-gradient(#dfdfdf 9px, #f1f1f1 9px) 0 0 / 10px 10px; }
.cells i { margin: 0 1px 1px 0; background: #b993fa; }
.cells .blank { grid-area: 5 / 29 / 8 / 30; margin: 0; background: #f4f4f4; }
.cells .c1 { grid-area: 2 / 17; border: 1px solid #666; }
.c2 { grid-area: 3 / 15; }
.c3 { grid-area: 4 / 16; }
.cells .c4 { grid-area: 5 / 15; background: #9a65f5; }
.c5 { grid-area: 6 / 17; }
.cells .c6 { grid-area: 7 / 16; background: #7a38f0; }
.c7 { grid-area: 7 / 19; }
.tip { position: absolute; left: 133px; top: -5px; width: 127px; height: 24px; background: #333; opacity: .98; border-radius: 2px; color: #fff; text-align: center; font: 600 8.900px/24px "Open Sans", sans-serif; }
.tip::after { content: ""; position: absolute; left: 58px; top: 24px; border: 5px solid transparent; border-top: 4px solid #333; border-bottom: 0; }

.files-wrap { margin: 16px 0 0 55px; width: 337px; height: 205px; background: #f4f4f4; padding: 4px 5px; }
.files { height: 196px; background: #fff; border-radius: 3px; box-shadow: 0 1px 1px #bbb; padding: 17px 17px 0 15px; }
.files-head { display: flex; align-items: center; height: 16px; color: #757575; gap: 7px; }
.files-head h2 { font-size: 12.900px; color: #444; margin-right: auto; }
.crumbs { display: flex; align-items: center; height: 16px; margin-top: 17px; padding-left: 8px; font: 9.300px "Open Sans", sans-serif; color: #666; }
.sl1 { margin-left: 14px; }
.crumbs a { margin-left: 10px; color: #6200ee; font-weight: 600; font-size: 9px; }
.sl2 { margin-left: 12px; }
.here { margin-left: 4px; font: 9px "Liberation Sans", sans-serif; }
.tiles { display: flex; gap: 7px; margin: 27px 0 0 4px; }
.tile { width: 83px; height: 84px; border-radius: 2px; box-shadow: 0 1px 2px #999; }
.art { width: 83px; height: 60px; }
.badge { font: 600 13.500px "Open Sans", sans-serif; fill: #fff; text-anchor: middle; }
.tile-foot { display: flex; justify-content: space-between; align-items: center; height: 24px; padding: 0 3px 0 8px; font-size: 10.500px; }

.backdrop { margin: 19px 0 0 72px; width: 305px; height: 392px; padding: 6px 5px; background: linear-gradient(90deg, #0e191d 60px, #4b3a3c 75px, #2d1417 100px, #5b5354 115px, #0e191d 130px) 9px 0 / 286px 6px no-repeat, linear-gradient(#274a12, #274a12) 28px 385px / 30px 3px no-repeat, linear-gradient(#4d4d4d, #4d4d4d) 0 301px / 100% 1px no-repeat, #707070; }
.modal { height: 379px; background: #fff; border-radius: 2px; box-shadow: 0 2px 5px #0008; }
.modal header { height: 41px; display: flex; align-items: center; justify-content: space-between; border-bottom: 1px solid #e5e5e5; padding: 0 13px 0 14px; }
.modal header svg { color: #757575; }
.modal h2 { font-size: 11.800px; }
.map { position: relative; margin: 14px; width: 267px; height: 280px; overflow: hidden; }
.map > svg { width: 267px; height: 280px; }
.lbl { font-family: "Noto Sans", sans-serif; fill: #333; }
.zoom { position: absolute; left: 6px; top: 6px; width: 18px; border-radius: 2px; background: #fff; box-shadow: 0 0 0 1px #0003; }
.zoom button { display: block; width: 18px; height: 17px; border: 0; padding: 0; background: none; font: 700 13px/17px "Liberation Sans", sans-serif; color: #000; }
.zoom button + button { border-top: 1px solid #ccc; }
.credit { position: absolute; right: 0; bottom: 0; width: 117px; height: 9px; background: #fffb; font: 6.100px/9px "Liberation Sans", sans-serif; white-space: nowrap; text-align: center; }
.credit a { color: #0078a8; }
.modal footer { height: 30px; border-top: 1px solid #e5e5e5; text-align: right; padding-right: 9px; font: 600 8.500px/28px "Open Sans", sans-serif; color: #6a20ee; }
```
